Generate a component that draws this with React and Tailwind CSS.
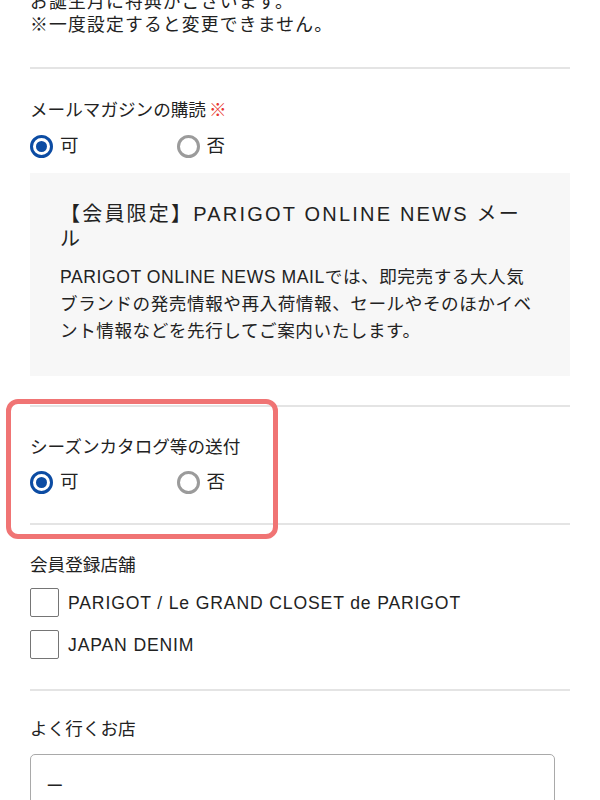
import React from "react";

function Divider() {
  return <div className="h-[2px] bg-[#e4e4e4]" />;
}

function Label({ children, required }) {
  return (
    <p className="text-[17.6px] leading-[26px]">
      {children}
      {required && <span className="ml-[3px] text-[#e8362f]">※</span>}
    </p>
  );
}

function Radio({ checked, label }) {
  return (
    <div className="flex items-center gap-[7px]">
      <span
        className={
          checked
            ? "flex h-[23px] w-[23px] items-center justify-center rounded-full border-[3px] border-[#0c4ca3]"
            : "flex h-[23px] w-[23px] items-center justify-center rounded-full border-[3px] border-[#9b9b9b]"
        }
      >
        {checked && <span className="h-[11px] w-[11px] rounded-full bg-[#0c4ca3]" />}
      </span>
      <span className="text-[18.5px] leading-[24px]">{label}</span>
    </div>
  );
}

function RadioRow({ className }) {
  return (
    <div className={"flex h-[24px] items-center " + className}>
      <div className="w-[146.5px]">
        <Radio checked label="可" />
      </div>
      <Radio label="否" />
    </div>
  );
}

function Checkbox({ label }) {
  return (
    <div className="flex items-center">
      <span className="h-[29px] w-[29px] rounded-[2px] border-[1.5px] border-[#757575] bg-white" />
      <span className="ml-[9px] text-[17.6px] leading-[24px] tracking-[0.85px]">{label}</span>
    </div>
  );
}

export default function App() {
  return (
    <div className="min-h-screen overflow-hidden bg-white font-['Liberation_Sans','Noto_Sans_CJK_JP',sans-serif] text-[#222]">
      <div className="-mt-[9px] px-[30px]">
        <div className="pb-[30px] text-[17.8px] leading-[23px] tracking-[1.2px]">
          <p>お誕生月に特典がございます。</p>
          <p>※一度設定すると変更できません。</p>
        </div>
        <Divider />

        <section className="pt-[28px] pb-[29px]">
          <Label required>メールマガジンの購読</Label>
          <RadioRow className="mt-[11px]" />
          <div className="mt-[15px] bg-[#f7f7f7] pl-[30px] pr-[34px] pt-[29px] pb-[31px]">
            <p className="text-[20px] leading-[25px] tracking-[2.2px]">
              【会員限定】PARIGOT ONLINE NEWS メール
            </p>
            <p className="mt-[12px] text-[17.6px] leading-[27px] tracking-[0.55px]">
              PARIGOT ONLINE NEWS MAILでは、即完売する大人気ブランドの発売情報や再入荷情報、セールやそのほかイベント情報などを先行してご案内いたします。
            </p>
          </div>
        </section>
        <Divider />

        <section className="relative pt-[27px] pb-[29px]">
          <Label>シーズンカタログ等の送付</Label>
          <RadioRow className="mt-[10px]" />
          <div className="pointer-events-none absolute left-[-24px] top-[-8px] h-[140px] w-[272px] rounded-[12px] border-[5px] border-[#f07474]" />
        </section>
        <Divider />

        <section className="pt-[27px] pb-[30px]">
          <Label>会員登録店舗</Label>
          <div className="mt-[10px] flex flex-col gap-[13px]">
            <Checkbox label="PARIGOT / Le GRAND CLOSET de PARIGOT" />
            <Checkbox label="JAPAN DENIM" />
          </div>
        </section>
        <Divider />

        <section className="pt-[25px]">
          <Label>よく行くお店</Label>
          <div className="mr-[15px] mt-[12px] flex h-[64px] items-center rounded-[5px] border border-[#a9a9a9] pl-[15px] text-[17.6px]">
            ー
          </div>
        </section>
      </div>
    </div>
  );
}
